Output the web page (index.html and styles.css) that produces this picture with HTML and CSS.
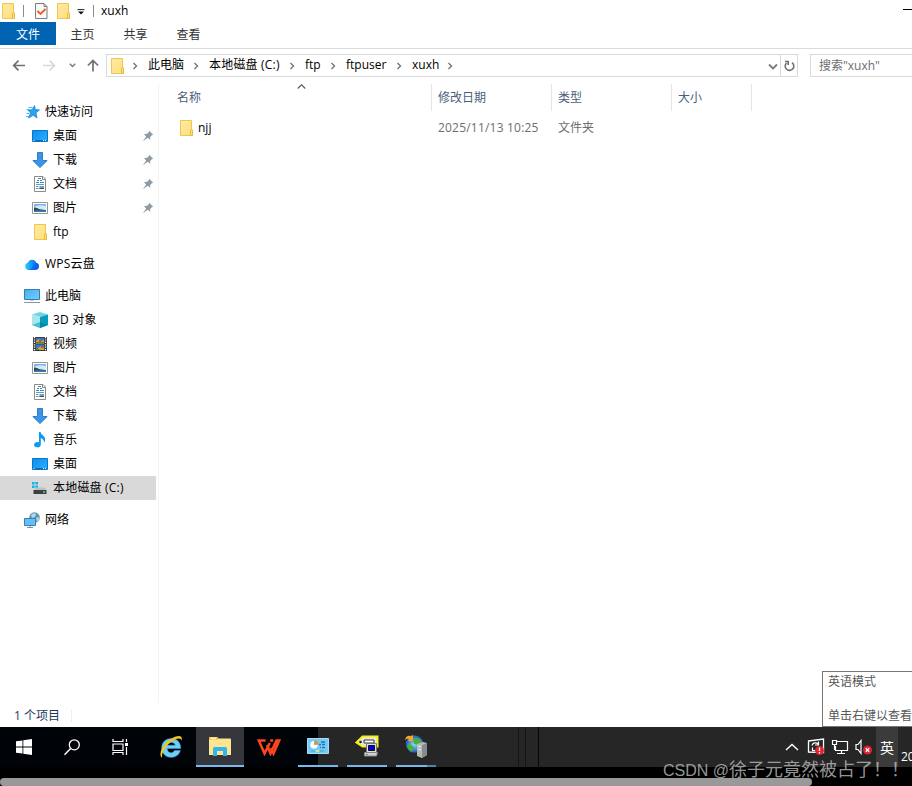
FILE: index.html
```html
<!DOCTYPE html>
<html lang="zh-CN">
<head>
    <meta charset="UTF-8">
    <meta name="viewport" content="width=device-width, initial-scale=1.0">
    <title>xuxh</title>
    <link rel="stylesheet" href="styles.css">
</head>
<body>

    <svg class="sprite" width="0" height="0">
        <defs>
            <linearGradient id="gFolder" x2="1" y2="1"><stop offset="0" stop-color="#ffe9a2"/><stop offset="1" stop-color="#ffdf7d"/></linearGradient>
            <linearGradient id="gBlue" x2="1" y2="1"><stop offset="0" stop-color="#0c8cf0"/><stop offset="1" stop-color="#2fb0ff"/></linearGradient>
            <linearGradient id="gCloud"><stop offset="0" stop-color="#22d3f5"/><stop offset="1" stop-color="#0a53ef"/></linearGradient>
            <linearGradient id="gScreen" x2="1" y2="1"><stop offset="0" stop-color="#3fb0f5"/><stop offset="1" stop-color="#79cdff"/></linearGradient>
            <radialGradient id="gEarth"><stop offset="0" stop-color="#8fe0ff"/><stop offset="1" stop-color="#1858b8"/></radialGradient>
        </defs>
        <symbol id="folder" viewBox="0 0 16 16">
            <path d="M2.500.5h11v9.500h1v5.500h-12z" fill="url(#gFolder)" stroke="#ecc94d"/>
            <path d="M12.500 15V10.500q0-1 1-1t1 1v5h-2" fill="#ffdf7d" stroke="#e5bd3c"/>
        </symbol>
        <symbol id="star" viewBox="0 0 16 16">
            <path d="M10.500 1.500l.8 4 4.200.4-3.500 2.800 1 5.300-3.800-2.700-4.700 2.700 2-5-2.500-3 4-.2z" fill="#2ba2ee" stroke="#168bd9" stroke-width=".8"/>
            <path d="M4.500 3.500h4M2.500 5.500h3M2.500 9.500h2.500M2 12.500h3" stroke="#48b4f3"/>
        </symbol>
        <symbol id="desktop" viewBox="0 0 16 16">
            <path d="M.5 2.500h15v11H.5z" fill="url(#gBlue)" stroke="#0877c4"/>
            <path d="M1 12.500h14" stroke="#086aaf"/>
            <path d="M1.500 12.500h1M11 12.500h1M13 12.500h1" stroke="#fff"/>
        </symbol>
        <symbol id="download" viewBox="0 0 16 16">
            <path d="M5.500.5h5v8h4.700L8 15.500.8 8.500h4.700z" fill="#3b94e4" stroke="#2b7fcc"/>
        </symbol>
        <symbol id="document" viewBox="0 0 16 16">
            <path d="M2.500.5h8.500l2.500 2.500v12.500h-11z" fill="#fff" stroke="#8b8b8b"/>
            <path d="M10.500.5v3h3" fill="none" stroke="#8b8b8b"/>
            <path d="M6 2.500h3M5 4.500h2M8 4.500h2M4 6.500h3M8 6.500h4" stroke="#2a92d7"/>
            <path d="M4 8.500h8M4 10.500h2.500M4 12.500h2.500" stroke="#858e96"/>
            <path d="M7.500 10h4.500v3H7.500z" fill="#6aa0bf"/>
            <path d="M7.500 12.500h4.500" stroke="#35566b"/>
        </symbol>
        <symbol id="picture" viewBox="0 0 16 16">
            <path d="M.5 2.500h15v11H.5z" fill="#fff" stroke="#959595"/>
            <path d="M2 4h12v8H2z" fill="#7db1ee"/>
            <path d="M2 7q4-3 12-1v4H2z" fill="#d2eafb"/>
            <path d="M2 7.500q3-.3 5 1.500l7 1.200V12H2z" fill="#27504f"/>
            <path d="M2 10.800q6-1.200 12-.3V12H2z" fill="#3a78ad"/>
        </symbol>
        <symbol id="pin" viewBox="0 0 12 12">
            <path d="M7.200.8L11.200 4.800 9.800 5.200 8.200 7 8.200 9.800 5.700 7.700.8 11.300 4.200 6.500 2 4.200 5 3.800 6.900 2.300z" fill="#8e9aa3"/>
        </symbol>
        <symbol id="cloud" viewBox="0 0 16 16">
            <path d="M4.500 14a3.700 3.700 0 0 1-.7-7.200A4.500 4.500 0 0 1 12.300 6.800 3.700 3.700 0 0 1 11.800 14z" fill="url(#gCloud)"/>
            <path d="M4.500 14q3.500-1 4.700-4.500t3.600-2.400a3.600 3.600 0 0 1-1 6.900z" fill="#0961ec" opacity=".65"/>
        </symbol>
        <symbol id="pc" viewBox="0 0 16 16">
            <path d="M.5 1.500h15v10H.5z" fill="url(#gScreen)" stroke="#3a7ca8"/>
            <path d="M6 12h4v1H6z" fill="#cad2d8"/>
            <path d="M0 14.500h16" stroke="#8399a8"/>
        </symbol>
        <symbol id="cube" viewBox="0 0 16 16">
            <path d="M0 2.500L8 0l8 2.500L8 5z" fill="#6bd6e0"/>
            <path d="M0 2.500L8 5v11L0 13z" fill="#a9e6ea"/>
            <path d="M8 5l8-2.500V13l-8 3z" fill="#079dc0"/>
            <path d="M0 13l8-3v6z" fill="#44c2cf"/>
            <path d="M8 10l8 3-8 3z" fill="#0689ad"/>
        </symbol>
        <symbol id="video" viewBox="0 0 16 16">
            <path d="M1 1h14v14H1z" fill="#3b3b3b"/>
            <path d="M2.500 1v14M13.500 1v14" stroke="#fff" stroke-width="1.300" stroke-dasharray="1.200 1.200"/>
            <path d="M4 2h8v5.500H4zM4 8.500h8V14H4z" fill="#3277d4"/>
            <path d="M4 5l3-2 2 2 3-1v3.500H4zM6 12l3-2 3 2v2H6z" fill="#d4a32b"/>
            <path d="M7 4h2v2H7zM9 10h2v2H9z" fill="#c9473b"/>
            <path d="M4 6.500h8M4 13.500h3" stroke="#3f8b3b"/>
        </symbol>
        <symbol id="music" viewBox="0 0 16 16">
            <path d="M7 0h1.500q.4 2 2.600 3.600 3.400 3 1.200 7.200-.2-3.400-3.500-4.800v6.500A3.400 2.700 0 1 1 7 10.300z" fill="#0b9af0"/>
        </symbol>
        <symbol id="drive" viewBox="0 0 16 16">
            <path d="M0 2h2.600v2.600H0zM3.400 2H6v2.600H3.400zM0 5.400h2.600V8H0zM3.400 5.400H6V8H3.400z" fill="#12b4ee"/>
            <path d="M3.500 7.500h9.500l1.500 3H2z" fill="#bfc2c4"/>
            <path d="M1.500 10h13v4h-13z" fill="#3d4143"/>
            <path d="M11 12h2" stroke="#4be04b" stroke-width="1.500"/>
        </symbol>
        <symbol id="network" viewBox="0 0 16 16">
            <circle cx="10.500" cy="5.500" r="5.300" fill="#5f95b2"/>
            <path d="M7 3q3-3 5-1l-1 3-3 1zM12 6l3-1q.5 3-2 5z" fill="#b5d6e5"/>
            <path d="M.5 6.500h11v7H.5z" fill="#62bff9" stroke="#3b80b0"/>
            <path d="M3 15.500h6M6 14v1" stroke="#7f929f"/>
        </symbol>
        <symbol id="sep" viewBox="0 0 6 8">
            <path d="M1.500 1l3 3-3 3" fill="none" stroke="#757575" stroke-width="1.400"/>
        </symbol>
    </svg>

    <div class="explorer">
        <div class="titlebar">
            <svg class="icon tb-folder"><use href="#folder"/></svg>
            <span class="tb-line"></span>
            <svg class="tb-check" viewBox="0 0 13 16">
                <path d="M.5.5h8.500l3 3v12H.5z" fill="#f9f9f9" stroke="#7d7d7d"/>
                <path d="M9 .5v3h3" fill="none" stroke="#7d7d7d"/>
                <path d="M2.500 8l3 3 5-5" fill="none" stroke="#e8601f" stroke-width="1.800"/>
            </svg>
            <svg class="icon tb-folder2"><use href="#folder"/></svg>
            <svg class="tb-drop" viewBox="0 0 8 6"><path d="M.5.600h7" stroke="#222"/><path d="M1 2.500h6L4 5.500z" fill="#111"/></svg>
            <span class="tb-line"></span>
            <span class="tb-title">xuxh</span>
            <span class="tb-min"></span>
        </div>

        <div class="tabs">
            <span class="tab tab-file">文件</span>
            <span class="tab">主页</span>
            <span class="tab">共享</span>
            <span class="tab">查看</span>
        </div>

        <div class="address-row">
            <svg class="nav-icons" viewBox="0 0 106 22">
                <g fill="none" stroke-width="1.700">
                    <path d="M25 11.500H14M18.500 6.700L13.700 11.500l4.800 4.800" stroke="#707070"/>
                    <path d="M43 11.500h11.500M49.700 6.700l4.800 4.800-4.800 4.800" stroke="#d9d9d9"/>
                    <path d="M69.800 9.800l2.700 2.700 2.700-2.700" stroke="#777" stroke-width="1.400"/>
                    <path d="M93 17.500V6.500M87.900 11.500L93 6.400l5.100 5.100" stroke="#707070"/>
                </g>
            </svg>
            <div class="address">
                <svg class="icon"><use href="#folder"/></svg>
                <svg class="sep"><use href="#sep"/></svg>
                <span class="crumb crumb-pc">此电脑</span>
                <svg class="sep"><use href="#sep"/></svg>
                <span class="crumb crumb-disk">本地磁盘 (C:)</span>
                <svg class="sep"><use href="#sep"/></svg>
                <span class="crumb crumb-ftp">ftp</span>
                <svg class="sep"><use href="#sep"/></svg>
                <span class="crumb crumb-user">ftpuser</span>
                <svg class="sep"><use href="#sep"/></svg>
                <span class="crumb crumb-last">xuxh</span>
                <svg class="sep"><use href="#sep"/></svg>
                <svg class="addr-down" viewBox="0 0 10 8"><path d="M1 1.500l4 4 4-4" fill="none" stroke="#7b7b7b" stroke-width="1.800"/></svg>
                <div class="refresh">
                    <svg width="12" height="12" viewBox="0 0 12 12"><path d="M9 2.600A4.300 4.300 0 1 1 3.500 3M2 1.500h3.200v3.600" fill="none" stroke="#707070" stroke-width="1.600"/></svg>
                </div>
            </div>
            <div class="search">搜索"xuxh"</div>
        </div>

        <div class="main">
            <div class="sidebar">
                <div class="group">
                    <div class="item root"><svg class="icon"><use href="#star"/></svg>快速访问</div>
                    <div class="item"><svg class="icon"><use href="#desktop"/></svg>桌面<svg class="pin"><use href="#pin"/></svg></div>
                    <div class="item"><svg class="icon"><use href="#download"/></svg>下载<svg class="pin"><use href="#pin"/></svg></div>
                    <div class="item"><svg class="icon"><use href="#document"/></svg>文档<svg class="pin"><use href="#pin"/></svg></div>
                    <div class="item"><svg class="icon"><use href="#picture"/></svg>图片<svg class="pin"><use href="#pin"/></svg></div>
                    <div class="item"><svg class="icon"><use href="#folder"/></svg>ftp</div>
                </div>
                <div class="group">
                    <div class="item root wide"><svg class="icon"><use href="#cloud"/></svg>WPS云盘</div>
                </div>
                <div class="group">
                    <div class="item root"><svg class="icon"><use href="#pc"/></svg>此电脑</div>
                    <div class="item wide"><svg class="icon"><use href="#cube"/></svg>3D 对象</div>
                    <div class="item"><svg class="icon"><use href="#video"/></svg>视频</div>
                    <div class="item"><svg class="icon"><use href="#picture"/></svg>图片</div>
                    <div class="item"><svg class="icon"><use href="#document"/></svg>文档</div>
                    <div class="item"><svg class="icon"><use href="#download"/></svg>下载</div>
                    <div class="item"><svg class="icon"><use href="#music"/></svg>音乐</div>
                    <div class="item"><svg class="icon"><use href="#desktop"/></svg>桌面</div>
                    <div class="item wide selected"><svg class="icon"><use href="#drive"/></svg>本地磁盘 (C:)</div>
                </div>
                <div class="group">
                    <div class="item root"><svg class="icon"><use href="#network"/></svg>网络</div>
                </div>
            </div>

            <div class="files">
                <div class="row head">
                    <span class="cell name">名称
                        <svg class="sort" viewBox="0 0 9 5"><path d="M.7 4.500l3.800-3.700 3.800 3.700" fill="none" stroke="#5c5c5c" stroke-width="1.200"/></svg>
                    </span>
                    <span class="cell">修改日期</span>
                    <span class="cell">类型</span>
                    <span class="cell size">大小</span>
                </div>
                <div class="row file">
                    <span class="cell name"><svg class="icon"><use href="#folder"/></svg>njj</span>
                    <span class="cell date">2025/11/13 10:25</span>
                    <span class="cell">文件夹</span>
                </div>
            </div>
        </div>

        <div class="status"><span>1 个项目</span></div>
    </div>

    <div class="taskbar">
        <div class="task narrow">
            <svg width="16" height="16" viewBox="0 0 16 16"><path d="M0 2.300L6.500 1.400v6.100H0zM7.300 1.300L16 0v7.500H7.300zM0 8.400h6.500v6.200L0 13.700zM7.300 8.400H16V16l-8.700-1.300z" fill="#fff"/></svg>
        </div>
        <div class="task narrow">
            <svg width="16" height="17" viewBox="0 0 16 17"><circle cx="10.300" cy="5.800" r="5" fill="none" stroke="#fff" stroke-width="1.300"/><path d="M6.600 9.500L.5 15.800" stroke="#fff" stroke-width="1.500"/></svg>
        </div>
        <div class="task narrow">
            <svg width="17" height="16" viewBox="0 0 17 16"><path d="M1 0v2.500h10V0M1 5h10v6.500H1zM1 16v-2.500h10V16M14.500 0v3M14.500 8v8" fill="none" stroke="#fff" stroke-width="1.200"/><path d="M13 4h3v3h-3z" fill="#fff"/></svg>
        </div>
        <div class="task ie">
            <svg width="24" height="24" viewBox="0 0 24 24">
                <path d="M12.500 3.500c5.500 0 9.400 4 9.200 10H8.200c.3 5 5.800 5.500 7.200 2h6c-1.400 4.500-4.700 6.800-9 6.800-5.500 0-9.700-3.500-9.700-9.300s4-9.500 9.800-9.500zM8.400 10.200h7.800c-.4-3.600-7-3.900-7.800 0z" fill="#6ccff6" stroke="#3aa2da" stroke-width=".5"/>
                <path d="M3.200 22.800C.2 21.500 1 15 5.500 9.500 11.500 2 20-.5 22.200 1.700c.8 1 .8 2.500.2 4-.3-2.500-2.800-2.900-6.400-1.100C8.800 8 1.800 17 3.200 22.800z" fill="#f4c51c"/>
            </svg>
        </div>
        <div class="task active">
            <svg width="22" height="19" viewBox="0 0 22 19">
                <path d="M0 1q0-1 1-1h7l1.500 1.500H21q1 0 1 1V18H0z" fill="#ffe491"/>
                <path d="M0 .7h9v1.800H0z" fill="#eebb42"/><path d="M2 1h5v1H2z" fill="#fff3c7"/>
                <path d="M4 19v-7.500q0-1.500 1.500-1.500h11q1.500 0 1.500 1.500V19h-4v-5H8v5z" fill="#35b3eb"/>
            </svg>
        </div>
        <div class="task">
            <svg width="24" height="17" viewBox="0 0 24 17"><path d="M8.500 1.500H1.800L7.500 14.500 12.800 4M10 6l3.500 8.500L19.500 1.500M13.200 1.500h3M18.500 1.500h3.700L16.500 14.500 14 9" fill="none" stroke="#ff451d" stroke-width="2.500"/></svg>
        </div>
        <div class="task open dark">
            <svg width="22" height="16" viewBox="0 0 22 16">
                <path d="M.5.500h21v15H.5z" fill="#76cbf4" stroke="#a5defa"/>
                <path d="M7 3a3.800 3.800 0 1 0 3.800 4H7z" fill="#fff"/><path d="M7.500 2.500v4h3.800a4 4 0 0 0-3.800-4z" fill="#ec8d24"/>
                <path d="M14 4h4M12 6.500h2m1 0h3M13 9.500h1m1 0h3" stroke="#1878b6" stroke-width="1.300"/><path d="M4 13h4m5 0h4" stroke="#4b9fc5"/><path d="M9 13h3" stroke="#ffe092" stroke-width="1.500"/>
            </svg>
        </div>
        <div class="task open">
            <svg width="24" height="22" viewBox="0 0 24 22">
                <path d="M1.500 7.500l6-6h15v10H7.500z" fill="#e8e8e8" stroke="#f5ed18" stroke-width="2"/>
                <circle cx="5.500" cy="7" r="1.300" fill="#222"/>
                <path d="M9 5h10v3H9z" fill="#fff" stroke="#333"/>
                <path d="M11.500 8.500h10v9h-10z" fill="#ddd" stroke="#777"/><path d="M13.500 10.500h6v5h-6z" fill="#0000e0" stroke="#111"/>
                <path d="M9.500 17.500h13l-1 3.500h-12z" fill="#d1d1d1" stroke="#888"/><path d="M11 19.500h2" stroke="#35b935"/>
            </svg>
        </div>
        <div class="task open iis">
            <svg width="24" height="25" viewBox="0 0 24 25">
                <circle cx="10.500" cy="10" r="8.800" fill="url(#gEarth)"/>
                <path d="M9 6q5-4 9 1l-3 4-5-1zM5 10l5 3-2 5q-4-2-5-6z" fill="#4eae34"/>
                <path d="M1 6q1-5 6-4l2-1v6H4l1-2q-2-1-4 1z" fill="#f7a51c"/>
                <path d="M13 10l6-2 4 1v12l-5 3-5-2z" fill="#b6babc"/><path d="M18 11l5-2v12l-5 3z" fill="#858b8e"/>
                <path d="M14 12l3 1M14 15l3 1" stroke="#eee"/><path d="M15 21h2" stroke="#9bd922" stroke-width="2"/>
            </svg>
        </div>
        <div class="dividers"><i></i><i></i><i></i></div>

        <div class="tray">
            <svg width="14" height="8" viewBox="0 0 14 8"><path d="M1 7l6-5.500L13 7" fill="none" stroke="#fff" stroke-width="1.400"/></svg>
            <svg width="18" height="18" viewBox="0 0 18 18">
                <path d="M1.500 3l15-2v13.500l-15-.5z" fill="none" stroke="#fff" stroke-width="1.300"/>
                <path d="M5 7.500a3.500 3.500 0 0 1 6-1.500M11.500 3.500V7H8M5.500 9.500v3h3" fill="none" stroke="#fff" stroke-width="1.200"/>
                <circle cx="12.500" cy="12.500" r="4.500" fill="#e0232d"/><path d="M12.500 9.500v3.500M12.500 14v1.500" stroke="#fff" stroke-width="1.300"/>
            </svg>
            <svg width="18" height="16" viewBox="0 0 18 16"><path d="M6 2.500h10.500v9H4.500V7M10.500 12v2.500M6 14.500h8M1.500 1.500h4v4h-4zM3.500 5.500V11" fill="none" stroke="#fff" stroke-width="1.200"/></svg>
            <svg width="18" height="16" viewBox="0 0 18 16">
                <path d="M1 5.500h2l3-4v13l-3-4H1z" fill="none" stroke="#fff" stroke-width="1.200"/>
                <circle cx="12.500" cy="11" r="4.500" fill="#e0232d"/><path d="M10.800 9.300l3.400 3.400m0-3.400l-3.400 3.400" stroke="#fff" stroke-width="1.300"/>
            </svg>
            <span class="lang">英</span>
            <span class="clock">20</span>
        </div>
    </div>

    <div class="scroll"><div class="thumb"></div></div>

    <div class="tooltip">
        <p>英语模式</p>
        <p>单击右键以查看</p>
    </div>
    <div class="watermark"><span class="wm-en">CSDN @</span>徐子元竟然被占了！！</div>

</body>
</html>
```
FILE: styles.css
```css
* {
    box-sizing: border-box;
}

body {
    position: relative;
    margin: 0;
    width: 912px;
    height: 786px;
    overflow: hidden;
    background: #fff;
    color: #000;
    font-family: "Open Sans", "Noto Sans CJK SC", sans-serif;
    font-size: 12px;
    line-height: 16px;
    white-space: nowrap;
}

svg {
    display: block;
    flex: none;
}

.sprite {
    position: absolute;
}

.icon {
    width: 16px;
    height: 16px;
}

.explorer {
    display: flex;
    flex-direction: column;
    height: 727px;
}

/* title */
.titlebar {
    display: flex;
    align-items: center;
    height: 22px;
}

.tb-line {
    width: 1px;
    height: 12px;
    background: #8c8c8c;
}

.tb-folder {
    margin-right: 7px;
}

.tb-check {
    width: 13px;
    height: 16px;
    margin-left: 11px;
}

.tb-folder2 {
    margin-left: 7px;
}

.tb-drop {
    width: 8px;
    height: 6px;
    margin: 2px 8px 0 6px;
}

.tb-title {
    margin-left: 7px;
}

.tb-min {
    width: 9px;
    height: 1px;
    margin: 0 0 3px auto;
    background: #000;
}

/* ribbon tabs */
.tabs {
    display: flex;
    height: 27px;
    border-bottom: 1px solid #dadbdc;
}

.tab {
    width: 53px;
    height: 23px;
    line-height: 25px;
    text-align: center;
    color: #333;
}

.tab-file {
    width: 56px;
    background: #0063b1;
    color: #fff;
}

/* address */
.address-row {
    display: flex;
    height: 35px;
    padding-top: 5px;
}

.nav-icons {
    width: 106px;
    height: 22px;
}

.address {
    display: flex;
    align-items: center;
    width: 692px;
    height: 23px;
    padding-left: 2px;
    border: 1px solid #d9d9d9;
}

.sep {
    width: 6px;
    height: 8px;
}

.address .icon + .sep {
    margin-left: 7px;
}

.crumb {
    margin: -1px 0 0 10px;
}

.crumb-pc {
    width: 45px;
}

.crumb-disk {
    width: 80px;
    letter-spacing: .2px;
}

.crumb-ftp {
    width: 25px;
}

.crumb-user {
    width: 50px;
}

.crumb-last {
    width: 35px;
}

.addr-down {
    width: 10px;
    height: 8px;
    margin: 2px 2px 0 auto;
}

.refresh {
    display: flex;
    align-items: center;
    justify-content: center;
    width: 17px;
    height: 21px;
    border-left: 1px solid #d9d9d9;
}

.search {
    flex: 1;
    height: 23px;
    margin-left: 12px;
    padding-left: 8px;
    border: 1px solid #d9d9d9;
    border-right: none;
    line-height: 21px;
    color: #6d6d6d;
}

/* content */
.main {
    display: flex;
    height: 619px;
}

.sidebar {
    width: 159px;
    padding-top: 16px;
    border-right: 1px solid #f3f3f3;
}

.group {
    margin-bottom: 8px;
}

.item {
    display: flex;
    align-items: center;
    width: 156px;
    height: 24px;
    padding-left: 32px;
}

.item .icon {
    margin-right: 5px;
}

.item.root {
    padding-left: 24px;
}

.wide {
    letter-spacing: .2px;
}

.selected {
    background: #d9d9d9;
}

.pin {
    width: 12px;
    height: 12px;
    margin-left: auto;
    margin-right: 2px;
}

.row {
    display: grid;
    grid-template-columns: 273px 120px 120px 80px;
}

.head {
    height: 27px;
    color: #4c607a;
}

.cell {
    display: flex;
    align-items: center;
    padding-left: 6px;
}

.head .cell {
    border-right: 1px solid #e5e5e5;
}

.cell.name {
    padding-left: 18px;
}

.sort {
    width: 9px;
    height: 5px;
    margin: 0 0 22px 96px;
}

.file {
    height: 22px;
    margin-top: 6px;
    color: #6d6d6d;
}

.file .name {
    padding-left: 19px;
    color: #000;
}

.file .icon {
    margin-right: 4px;
}

.date {
    letter-spacing: .2px;
}

.status {
    height: 24px;
    padding-left: 14px;
    line-height: 26px;
    color: #1e395b;
}

.status span {
    display: inline-block;
    width: 58px;
    height: 12px;
    line-height: 12px;
    border-right: 1px solid #f0f0f0;
}

/* taskbar */
.taskbar {
    display: flex;
    height: 40px;
    background: linear-gradient(90deg, #000308 318px, #262626 318px);
}

.task {
    display: flex;
    align-items: center;
    justify-content: center;
    width: 49px;
    height: 40px;
}

.narrow {
    width: 48px;
}

.task.ie {
    width: 52px;
    padding-left: 2px;
}

.active {
    width: 48px;
    background: #35373c;
    border-bottom: 2px solid #76b9ed;
}

.open {
    width: 40px;
    margin-right: 9px;
    border-bottom: 2px solid #76b9ed;
}

.open.dark {
    margin-left: 5px;
}

/* the stacked window shows as a dimmer end of the underline */
.iis {
    border-bottom: none;
    padding-bottom: 2px;
    background: linear-gradient(90deg, #76b9ed 31px, #5283a9 31px) 0 100% / 100% 2px no-repeat;
}

.dividers {
    display: flex;
    margin-left: 73px;
    gap: 6px;
}

.dividers i {
    width: 1px;
    background: #151515;
}

.dividers i:last-child {
    margin-left: 6px;
    background: #050505;
}

.tray {
    display: flex;
    align-items: center;
    gap: 6px;
    margin-left: auto;
    color: #fff;
}

.lang {
    width: 22px;
    height: 40px;
    margin-left: -3px;
    background: #3b3b3b;
    line-height: 41px;
    text-align: center;
    font-size: 14px;
}

.tray svg:first-child {
    margin-right: 2px;
}

.clock {
    width: 11px;
    margin: 20px 0 0 -3px;
}

.scroll {
    height: 19px;
    padding-top: 11px;
    background: #000;
}

.thumb {
    width: 812px;
    height: 8px;
    border-radius: 4px;
    background: #999;
}

.tooltip {
    position: absolute;
    left: 822px;
    top: 671px;
    width: 100px;
    height: 56px;
    padding: 2px 5px;
    border: 1px solid #767676;
    background: #fff;
    color: #575757;
}

.tooltip p {
    margin: 0 0 18px;
}

.watermark {
    position: absolute;
    left: 663px;
    top: 758px;
    line-height: 24px;
    font-size: 18px;
    font-family: "Liberation Sans", "Noto Sans CJK SC", sans-serif;
    color: rgba(190, 190, 190, .8);
}

.wm-en {
    font-size: 16px;
}
```
